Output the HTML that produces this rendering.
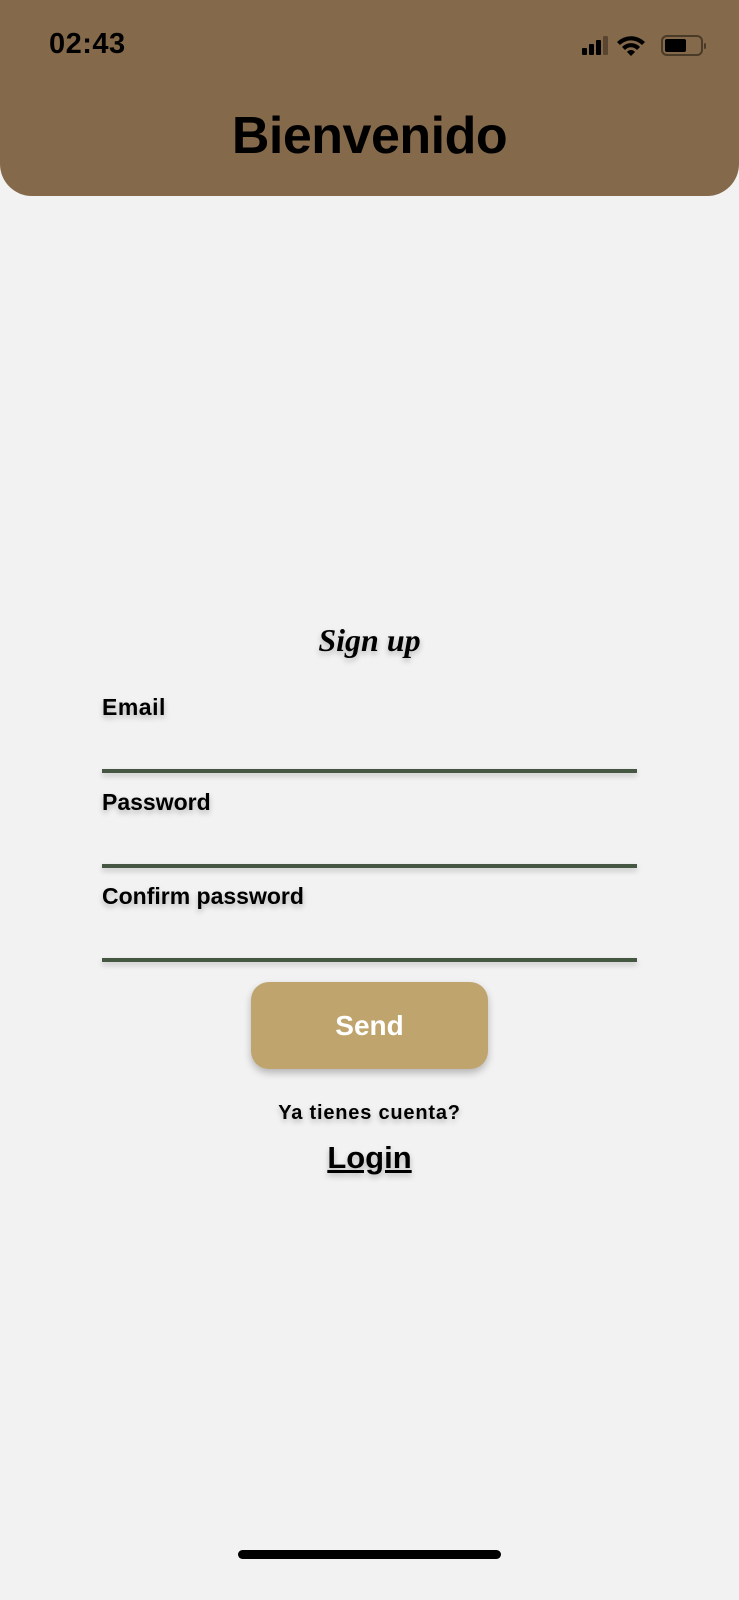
<!DOCTYPE html>
<html><head><meta charset="utf-8"><style>
*{margin:0;padding:0;box-sizing:border-box}
body{width:739px;height:1600px;background:#f2f2f2;position:relative;overflow:hidden;font-family:"Liberation Sans",sans-serif;color:#000}
.hdr{position:absolute;left:0;top:0;width:739px;height:196px;background:#84694a;border-radius:0 0 32px 32px}
.time{position:absolute;left:49px;top:28px;font-size:29px;font-weight:bold;letter-spacing:0.5px}
.title{position:absolute;left:0;width:739px;top:106px;text-align:center;font-size:52px;font-weight:bold;letter-spacing:-0.5px}
.t{position:absolute;text-shadow:0 3px 6px rgba(0,0,0,0.25);font-weight:bold}
.line{position:absolute;left:102px;width:535px;height:4px;background:#455642;box-shadow:0 3px 6px rgba(0,0,0,0.2)}
.btn{position:absolute;left:251px;top:982px;width:237px;height:87px;background:#c0a46d;border-radius:18px;box-shadow:0 4px 8px rgba(0,0,0,0.25);color:#fff;font-size:28px;font-weight:bold;text-align:center;line-height:87px}
.home{position:absolute;left:238px;top:1550px;width:263px;height:9px;border-radius:5px;background:#000}
</style></head><body>
<div class="hdr">
<div class="time">02:43</div>
<svg style="position:absolute;left:582px;top:34px" width="126" height="24" viewBox="0 0 126 24">
<rect x="0" y="14" width="5" height="7" rx="1" fill="#000"/>
<rect x="7" y="10" width="5" height="11" rx="1" fill="#000"/>
<rect x="14" y="6" width="5" height="15" rx="1" fill="#000"/>
<rect x="21" y="2" width="5" height="19" rx="1" fill="#5a4630"/>
<path d="M35 8a20 20 0 0 1 28 0l-3 3a15.5 15.5 0 0 0-22 0z M40 13a12.5 12.5 0 0 1 18 0l-3 3a8 8 0 0 0-12 0z M45 18a5 5 0 0 1 8 0L49 22z" fill="#000"/>
<rect x="80" y="2" width="40" height="19" rx="5" fill="none" stroke="#4a3a28" stroke-width="2"/>
<rect x="83" y="5" width="21" height="13" rx="2" fill="#000"/>
<rect x="122" y="9" width="2" height="6" rx="1" fill="#4a3a28"/>
</svg>
<div class="title">Bienvenido</div>
</div>
<div class="t" style="left:0;width:739px;text-align:center;top:622px;font-family:'Liberation Serif',serif;font-style:italic;font-size:32px">Sign up</div>
<div class="t" style="left:102px;top:694px;font-size:23px;letter-spacing:0.5px">Email</div>
<div class="line" style="top:769px"></div>
<div class="t" style="left:102px;top:789px;font-size:23px">Password</div>
<div class="line" style="top:864px"></div>
<div class="t" style="left:102px;top:883px;font-size:23px">Confirm password</div>
<div class="line" style="top:958px"></div>
<div class="btn">Send</div>
<div class="t" style="left:0;width:739px;text-align:center;top:1102px;font-size:20px;letter-spacing:0.8px">Ya tienes cuenta?</div>
<div class="t" style="left:0;width:739px;text-align:center;top:1140px;font-size:31px;text-decoration:underline">Login</div>
<div class="home"></div>
</body></html>
